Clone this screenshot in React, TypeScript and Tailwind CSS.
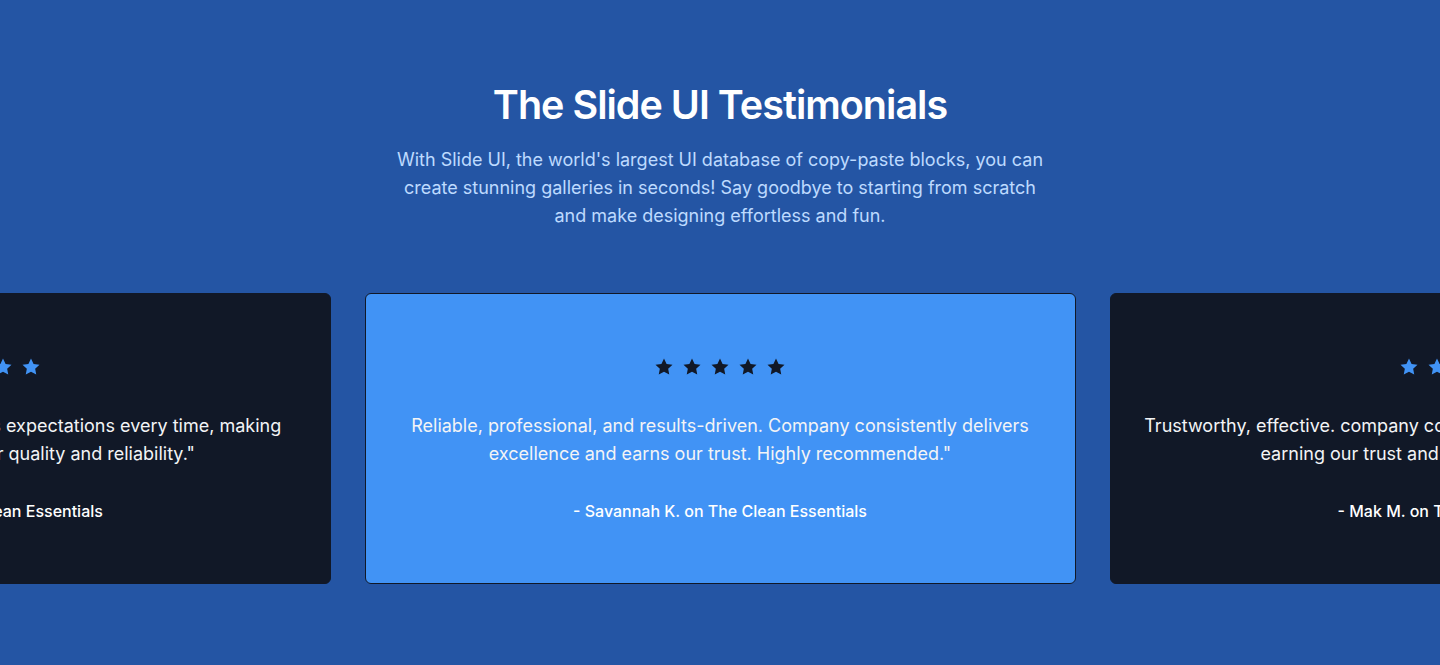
import React from "react";

type Testimonial = {
  quote: string;
  author: string;
  active?: boolean;
};

const testimonials: Testimonial[] = [
  {
    quote:
      "Superb service! The company exceeds expectations every time, making them our first choice for their quality and reliability.\"",
    author: "- Jane D. on The Clean Essentials",
  },
  {
    quote:
      "Reliable, professional, and results-driven. Company consistently delivers excellence and earns our trust. Highly recommended.\"",
    author: "- Savannah K. on The Clean Essentials",
    active: true,
  },
  {
    quote:
      "Trustworthy, effective. company consistently delivers beyond expectations, earning our trust and loyalty with every project.\"",
    author: "- Mak M. on The Clean Essentials",
  },
];

const Star = ({ className }: { className: string }) => (
  <svg viewBox="0 0 24 24" className={className} fill="currentColor">
    <path d="M12 1.8l3.1 6.5 7.1.9-5.2 4.9 1.3 7L12 17.7l-6.3 3.4 1.3-7-5.2-4.9 7.1-.9z" />
  </svg>
);

const Card = ({ t }: { t: Testimonial }) => {
  const box = t.active
    ? "bg-[#4193f5] border border-[#111827]"
    : "bg-[#111827] border border-[#111827]";
  const starColor = t.active ? "text-[#111827]" : "text-[#4193f5]";
  return (
    <div className={`w-[711px] shrink-0 rounded-md px-8 pt-[63px] pb-[60px] text-center ${box}`}>
      <div className="flex justify-center gap-2">
        {[0, 1, 2, 3, 4].map((i) => (
          <Star key={i} className={`w-5 h-5 ${starColor}`} />
        ))}
      </div>
      <p className="mt-[35px] text-lg leading-7 text-gray-100">{t.quote}</p>
      <p className="mt-[31px] text-base leading-6 font-medium text-white">{t.author}</p>
    </div>
  );
};

export default function App() {
  return (
    <div
      className="w-full h-[665px] bg-[#2455a4] overflow-hidden pt-[81px]"
      style={{ fontFamily: "Inter, 'Noto Sans', sans-serif" }}
    >
      <div className="flex flex-col items-center text-center">
        <h1 className="text-[39.5px] leading-[48px] font-semibold text-white tracking-tight">
          The Slide UI Testimonials
        </h1>
        <p className="mt-[17px] max-w-[656px] text-lg leading-7 text-blue-200">
          With Slide UI, the world's largest UI database of copy-paste blocks, you can create
          stunning galleries in seconds! Say goodbye to starting from scratch and make designing
          effortless and fun.
        </p>
      </div>

      <div className="mt-[63px] flex justify-center gap-[34px]">
        {testimonials.map((t, i) => (
          <Card key={i} t={t} />
        ))}
      </div>
    </div>
  );
}
